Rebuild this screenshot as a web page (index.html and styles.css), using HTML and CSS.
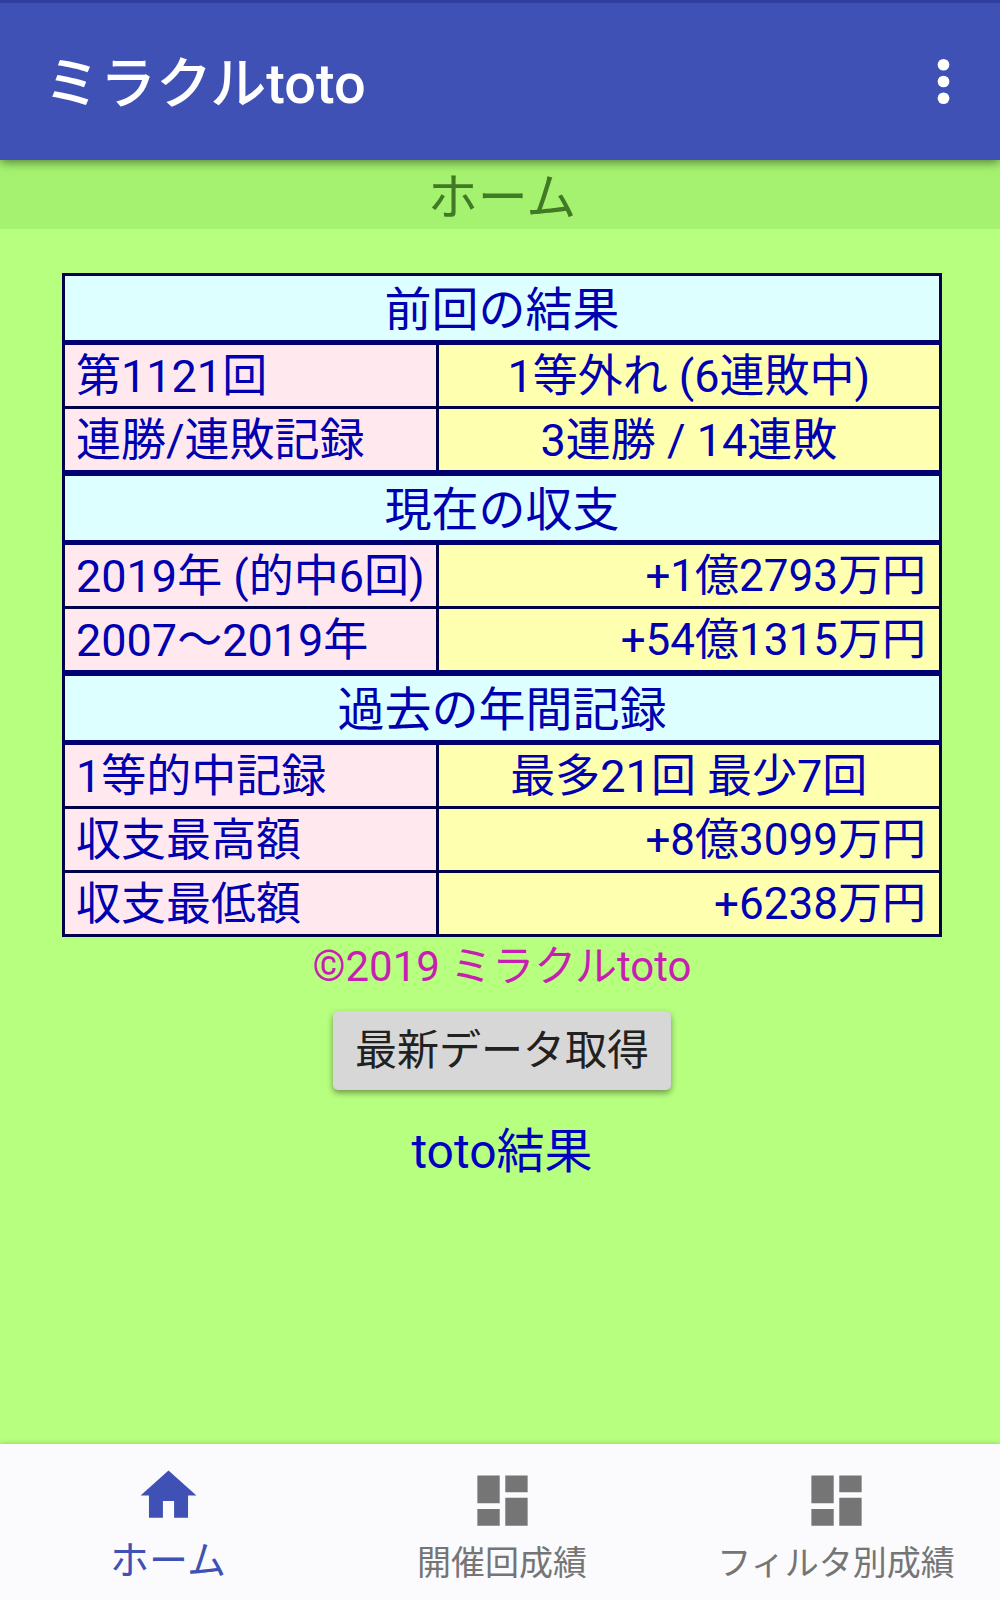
FILE: index.html
```html
<!DOCTYPE html>
<html lang="ja">
  <head>
    <meta charset="UTF-8" />
    <meta name="viewport" content="width=device-width, initial-scale=1.0" />
    <title>ミラクルtoto</title>
    <link rel="stylesheet" href="styles.css">
  </head>
  <body>
    <header class="app-bar">
      <h1>ミラクルtoto</h1>
      <button class="menu-button" type="button" aria-label="メニュー">
        <svg class="icon" viewBox="0 0 24 24">
          <circle cx="12" cy="6" r="2.1" />
          <circle cx="12" cy="12" r="2.1" />
          <circle cx="12" cy="18" r="2.1" />
        </svg>
      </button>
    </header>

    <h2 class="page-title">ホーム</h2>

    <main>
      <table class="results">
        <tbody>
          <tr>
            <th class="section" colspan="2">前回の結果</th>
          </tr>
          <tr>
            <th scope="row">第1121回</th>
            <td>1等外れ (6連敗中)</td>
          </tr>
          <tr>
            <th scope="row">連勝/連敗記録</th>
            <td>3連勝 / 14連敗</td>
          </tr>
        </tbody>
        <tbody>
          <tr>
            <th class="section" colspan="2">現在の収支</th>
          </tr>
          <tr>
            <th scope="row">2019年 (的中6回)</th>
            <td class="money">+1億2793万円</td>
          </tr>
          <tr>
            <th scope="row">2007〜2019年</th>
            <td class="money">+54億1315万円</td>
          </tr>
        </tbody>
        <tbody>
          <tr>
            <th class="section" colspan="2">過去の年間記録</th>
          </tr>
          <tr>
            <th scope="row">1等的中記録</th>
            <td>最多21回 最少7回</td>
          </tr>
          <tr>
            <th scope="row">収支最高額</th>
            <td class="money">+8億3099万円</td>
          </tr>
          <tr>
            <th scope="row">収支最低額</th>
            <td class="money">+6238万円</td>
          </tr>
        </tbody>
      </table>

      <p class="copyright">©2019 ミラクルtoto</p>
      <button class="update-button" type="button">最新データ取得</button>
      <a class="toto-link" href="#">toto結果</a>
    </main>

    <nav class="bottom-nav">
      <a class="active" href="#">
        <svg class="icon" viewBox="0 0 24 24">
          <path d="M10 20v-6h4v6h5v-8h3L12 3 2 12h3v8z" />
        </svg>
        ホーム
      </a>
      <a href="#">
        <svg class="icon" viewBox="0 0 24 24">
          <path d="M3 13h8V3H3v10zm0 8h8v-6H3v6zm10 0h8V11h-8v10zm0-18v6h8V3h-8z" />
        </svg>
        開催回成績
      </a>
      <a href="#">
        <svg class="icon" viewBox="0 0 24 24">
          <path d="M3 13h8V3H3v10zm0 8h8v-6H3v6zm10 0h8V11h-8v10zm0-18v6h8V3h-8z" />
        </svg>
        フィルタ別成績
      </a>
    </nav>
  </body>
</html>
```

FILE: styles.css
```css
* {
  box-sizing: border-box;
}

body {
  display: flex;
  flex-direction: column;
  min-height: 100vh;
  margin: 0;
  background-color: #b7ff7f;
  font-family: Roboto, "Noto Sans CJK JP", sans-serif;
}

.icon {
  display: block;
  width: 67px;
  height: 67px;
  fill: currentColor;
}

/* App bar */
.app-bar {
  display: flex;
  align-items: center;
  justify-content: space-between;
  height: 160px;
  padding: 0 23px 0 44px;
  border-top: 3px solid #303f9f;
  background-color: #3f51b5;
  color: #fff;
  box-shadow: 0 2px 10px rgba(0, 0, 0, 0.5);
  z-index: 1;
}

.app-bar h1 {
  margin: 0;
  padding-bottom: 6px;
  font-size: 56px;
  font-weight: 500;
}

.menu-button {
  padding: 0;
  border: none;
  background: none;
  color: inherit;
  cursor: pointer;
}

/* Content */
.page-title {
  margin: 0;
  padding: 8px 0 0 4px;
  background-color: #a4f26f;
  color: #417a25;
  font-size: 50px;
  font-weight: 400;
  line-height: 61px;
  text-align: center;
}

main {
  display: flex;
  flex: 1;
  flex-direction: column;
  align-items: center;
  padding: 44px 58px 0 62px;
}

.results {
  width: 100%;
  border-collapse: collapse;
  color: #0000b0;
  font-size: 45px;
  line-height: 59px;
}

.results th,
.results td {
  padding: 2px 13px 0;
  border: 3px solid #00004d;
  font-weight: 400;
}

.results th {
  width: 372px;
  padding: 2px 11px 0;
  background-color: #ffe9ee;
  text-align: left;
  white-space: nowrap;
}

.results td {
  background-color: #ffffb0;
  text-align: center;
}

.results .money {
  font-size: 44px;
  text-align: right;
}

.results .section {
  padding-top: 4px;
  border-top: 6px solid #000070;
  border-bottom: 5px solid #000070;
  background-color: #dff;
  font-size: 47px;
  line-height: 60px;
  text-align: center;
}

.results tbody:first-child .section {
  border-top: 3px solid #00004d;
}

.copyright {
  margin: 0;
  color: #c81eb4;
  font-size: 42px;
  line-height: 60px;
}

.update-button {
  margin-top: 14px;
  padding: 0 22px;
  border: none;
  border-radius: 5px;
  background-color: #d8d7d8;
  color: #212121;
  font-family: inherit;
  font-size: 42px;
  line-height: 79px;
  box-shadow: 0 3px 6px rgba(0, 0, 0, 0.4);
  cursor: pointer;
}

.toto-link {
  margin-top: 30px;
  color: #0000c0;
  font-size: 48px;
  line-height: 64px;
  text-decoration: none;
}

/* Bottom navigation */
.bottom-nav {
  display: flex;
  gap: 6px;
  height: 156px;
  padding-left: 4px;
  background-color: #fbfafc;
  box-shadow: 0 0 6px rgba(0, 0, 0, 0.2);
}

.bottom-nav a {
  display: flex;
  flex: 1;
  flex-direction: column;
  align-items: center;
  padding-top: 23px;
  color: #757575;
  font-size: 34px;
  line-height: 58px;
  text-decoration: none;
}

.bottom-nav .active {
  padding-top: 18px;
  color: #3f51b5;
  font-size: 39px;
  line-height: 64px;
}
```
